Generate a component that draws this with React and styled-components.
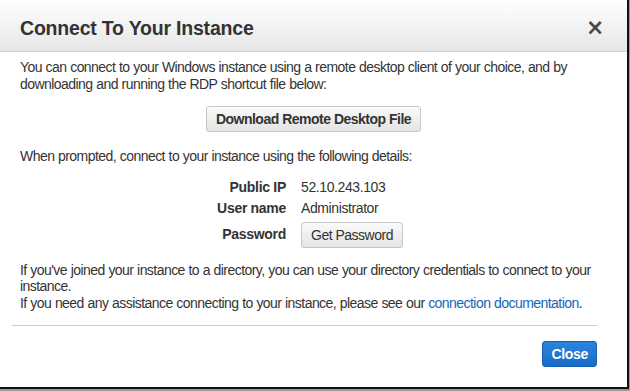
import React from 'react'
import styled, { createGlobalStyle } from 'styled-components'

const GlobalStyle = createGlobalStyle`
  html, body {
    margin: 0;
    padding: 0;
    background: #9a9a9a;
  }
  body {
    font-family: 'Liberation Sans', Arial, sans-serif;
    color: #333;
  }
`

const details = [
  { label: 'Public IP', value: '52.10.243.103' },
  { label: 'User name', value: 'Administrator' },
]

export default function App() {
  return (
    <>
      <GlobalStyle />
      <Dialog>
        <Header>
          <Title>Connect To Your Instance</Title>
          <CloseX>×</CloseX>
        </Header>
        <Body>
          <Text>
            You can connect to your Windows instance using a remote desktop client of your
            choice, and by downloading and running the RDP shortcut file below:
          </Text>
          <Center>
            <Button>Download Remote Desktop File</Button>
          </Center>
          <Text>When prompted, connect to your instance using the following details:</Text>
          <Details>
            {details.map(d => (
              <React.Fragment key={d.label}>
                <Label>{d.label}</Label>
                <Value>{d.value}</Value>
              </React.Fragment>
            ))}
            <Label $last>Password</Label>
            <Cell>
              <Button $small>Get Password</Button>
            </Cell>
          </Details>
          <Text $top={14}>
            If you've joined your instance to a directory, you can use your directory credentials
            to connect to your instance.
            <br />
            If you need any assistance connecting to your instance, please see our{' '}
            <Link>connection documentation</Link>.
          </Text>
        </Body>
        <Footer>
          <PrimaryButton>Close</PrimaryButton>
        </Footer>
      </Dialog>
    </>
  )
}

const Dialog = styled.div`
  width: 627px;
  height: 387px;
  background: #fff;
  border-right: 2px solid #111;
  border-bottom: 2px solid #111;
  display: flex;
  flex-direction: column;
`

const Header = styled.div`
  height: 52px;
  flex: none;
  box-sizing: border-box;
  display: flex;
  align-items: center;
  justify-content: space-between;
  padding: 5px 24px 0 20px;
  background: linear-gradient(#ffffff, #e6e6e6);
  border-bottom: 1px solid #cfcfcf;
`

const Title = styled.h1`
  margin: 0;
  font-size: 19.5px;
  font-weight: bold;
  color: #333;
  letter-spacing: -0.2px;
`

const CloseX = styled.span`
  font-size: 27px;
  font-weight: normal;
  color: #444;
  line-height: 1;
  -webkit-text-stroke: 0.6px #444;
`

const Body = styled.div`
  padding: 7px 20px 0;
`

const Text = styled.p`
  margin: ${p => p.$top || 0}px 0 0;
  font-size: 14px;
  line-height: 16.5px;
  letter-spacing: -0.55px;
  word-spacing: 0.3px;
  color: #333;
`

const Center = styled.div`
  display: flex;
  justify-content: center;
  margin: 14px 0 16px;
`

const Button = styled.button`
  font-family: 'Liberation Sans', Arial, sans-serif;
  font-size: 14px;
  font-weight: ${p => (p.$small ? 'normal' : 'bold')};
  color: #333;
  height: 26px;
  padding: 0 9px;
  border: 1px solid #c6c6c6;
  border-radius: 3px;
  background: linear-gradient(#fafafa, #e4e4e4);
  letter-spacing: -0.5px;
`

const Details = styled.div`
  display: grid;
  grid-template-columns: 266px auto;
  column-gap: 15px;
  row-gap: 4px;
  margin-top: 14px;
  align-items: center;
`

const Label = styled.div`
  text-align: right;
  font-weight: bold;
  font-size: 14px;
  line-height: 17px;
  letter-spacing: -0.3px;
  margin-top: ${p => (p.$last ? '1px' : '0')};
`

const Value = styled.div`
  font-size: 14px;
  line-height: 17px;
  letter-spacing: -0.4px;
`

const Cell = styled.div`
  margin-top: 1px;
`

const Link = styled.a`
  color: #1166bb;
`

const Footer = styled.div`
  margin: auto 30px 0 12px;
  border-top: 1px solid #cccccc;
  padding: 15px 0 20px;
  display: flex;
  justify-content: flex-end;
`

const PrimaryButton = styled.button`
  font-family: 'Liberation Sans', Arial, sans-serif;
  font-size: 14px;
  font-weight: bold;
  color: #fff;
  height: 26px;
  padding: 0 8px;
  border: 1px solid #1560b4;
  border-radius: 3px;
  background: linear-gradient(#2a83dd, #1a6cc6);
  letter-spacing: -0.3px;
`
